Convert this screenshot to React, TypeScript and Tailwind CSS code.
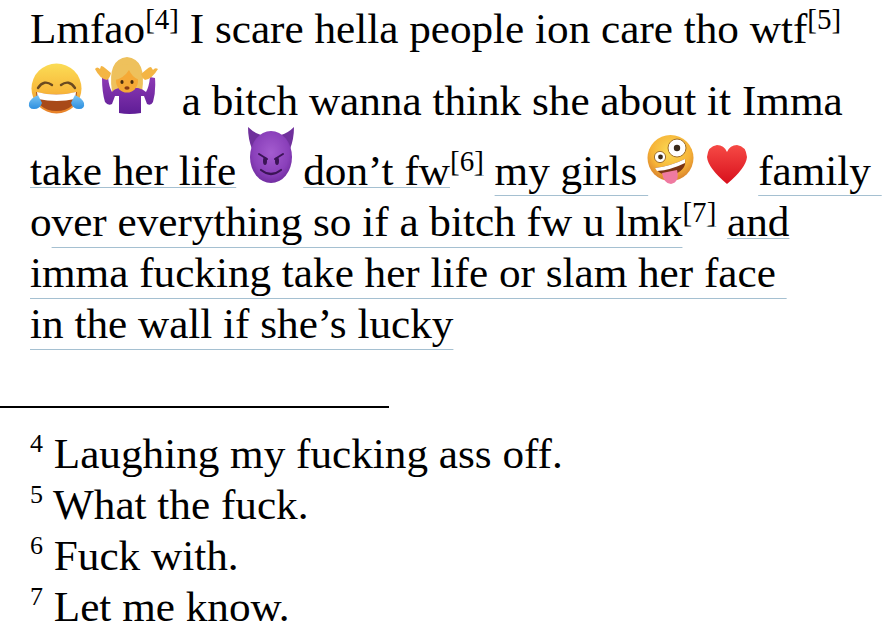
import React from "react";

const emojiBox = "inline-block -mt-[70px] blur-[0.5px]";

const LaughEmoji = () => (
  <svg viewBox="0 0 57 51" className={`${emojiBox} w-[57px] h-[51px] -ml-[2px] align-[1px]`}>
    <defs>
      <linearGradient id="laughFace" x1="0" y1="0" x2="0" y2="1">
        <stop offset="0%" stopColor="#fbdc55" />
        <stop offset="55%" stopColor="#f8b93c" />
        <stop offset="100%" stopColor="#e77f28" />
      </linearGradient>
      <linearGradient id="laughTear" x1="0" y1="0" x2="0" y2="1">
        <stop offset="0%" stopColor="#7cc4f2" />
        <stop offset="100%" stopColor="#2c8fe0" />
      </linearGradient>
    </defs>
    <circle cx="28.500" cy="25.500" r="25" fill="url(#laughFace)" />
    <path d="M10 25q6-9 14-3M33 22q8-6 14 3" fill="none" stroke="#6b4a20" strokeWidth="2.400" strokeLinecap="round" />
    <path d="M8 29q20 5 41 0q-1 19-20.500 19q-19.500 0-20.500-19z" fill="#a84a18" />
    <path d="M9 29q19 5 39 0l-1 7q-18 4-37 0z" fill="#fff" />
    <path d="M10 32q-7 3-9 8q-1 6 5 6q6 0 8-6z" fill="url(#laughTear)" />
    <path d="M47 32q7 3 9 8q1 6-5 6q-6 0-8-6z" fill="url(#laughTear)" />
  </svg>
);

const ShrugEmoji = () => (
  <svg viewBox="0 0 63 59" className={`${emojiBox} w-[63px] h-[59px] ml-[10px] mr-[13px] align-baseline`}>
    <defs>
      <linearGradient id="shrugTop" x1="0" y1="0" x2="0" y2="1">
        <stop offset="0%" stopColor="#8e3bb5" />
        <stop offset="100%" stopColor="#5f1d96" />
      </linearGradient>
    </defs>
    <path d="M17 36Q12 3 32 1Q52 3 47 36q-15 4-30 0z" fill="#eec15c" />
    <path d="M7 22q0 14 3 24q3 4 7 2l3-8h4v17q10 2 22 0V40h3l3 8q4 2 6-2q3-10 2-24l-5-1q-1 10-4 15q-3-3-8-4H24q-5 1-7 4q-3-5-4-15z" fill="url(#shrugTop)" />
    <path d="M0 13q2-3 5 0l1-3q2 0 4 2l6 5q-1 5-4 7q-7-1-12-11z" fill="#f4b544" />
    <path d="M63 13q-3-2-5 1l-2-3q-2 0-4 2l-6 5q1 4 4 6q7-1 13-11z" fill="#f4b544" />
    <ellipse cx="32" cy="25" rx="11" ry="11.500" fill="#f5a936" />
    <path d="M20 24q9-2 14-10q3 7 10 10q1-15-12-16q-13 1-12 16z" fill="#eec15c" />
    <ellipse cx="27" cy="26" rx="1.600" ry="2" fill="#4a2c10" />
    <ellipse cx="37" cy="26" rx="1.600" ry="2" fill="#4a2c10" />
    <ellipse cx="32" cy="32" rx="2.600" ry="1.800" fill="#8a3d14" />
  </svg>
);

const DevilEmoji = () => (
  <svg viewBox="0 0 47 57" className={`${emojiBox} w-[47px] h-[57px] ml-[12px] mr-[8px] align-[1px]`}>
    <defs>
      <radialGradient id="devilFace" cx="50%" cy="42%" r="60%">
        <stop offset="0%" stopColor="#a45ccf" />
        <stop offset="70%" stopColor="#8a40ba" />
        <stop offset="100%" stopColor="#6f2c9e" />
      </radialGradient>
    </defs>
    <path d="M0 0q0 12 4 22l9-14q-7-2-13-8zM46 0q0 12-4 22L33 8q7-2 13-8z" fill="#70309c" />
    <ellipse cx="23" cy="30" rx="21" ry="26" fill="url(#devilFace)" />
    <path d="M11 27l8 5M35 27l-8 5" stroke="#3b1456" strokeWidth="2" strokeLinecap="round" />
    <ellipse cx="17" cy="34" rx="2" ry="4" fill="#3b1456" />
    <ellipse cx="29" cy="34" rx="2" ry="4" fill="#3b1456" />
    <path d="M13 43q10 8 20 0" fill="none" stroke="#3b1456" strokeWidth="2.200" strokeLinecap="round" />
  </svg>
);

const ZanyEmoji = () => (
  <svg viewBox="0 0 49 49" className={`${emojiBox} w-[49px] h-[49px] -ml-[2px] align-[1px]`}>
    <defs>
      <radialGradient id="zanyFace" cx="50%" cy="35%" r="65%">
        <stop offset="0%" stopColor="#fbdc55" />
        <stop offset="65%" stopColor="#f6b338" />
        <stop offset="100%" stopColor="#d9822c" />
      </radialGradient>
    </defs>
    <circle cx="24.500" cy="23" r="23" fill="url(#zanyFace)" />
    <circle cx="31" cy="13" r="9" fill="#fff" stroke="#a0702c" strokeWidth="1" />
    <circle cx="31" cy="13" r="3.200" fill="#3a2a1a" />
    <circle cx="14" cy="22" r="5.600" fill="#fff" stroke="#a0702c" strokeWidth="1" />
    <circle cx="14.500" cy="22" r="2.400" fill="#3a2a1a" />
    <path d="M9 33q16-2 30-9q2 10-10 15q-13 4-20-6z" fill="#7a3414" />
    <path d="M9 33q16-2 30-9l0 4q-14 7-28 8z" fill="#fff" />
    <path d="M16 38l15-3q3 12-6 14q-7 0-9-11z" fill="#ef7aa0" />
  </svg>
);

const HeartEmoji = () => (
  <svg viewBox="0 0 40 39" className={`${emojiBox} w-[40px] h-[39px] ml-[12px] mr-[11px] align-[1px]`}>
    <defs>
      <linearGradient id="heartFill" x1="0" y1="0" x2="0" y2="1">
        <stop offset="0%" stopColor="#f64a45" />
        <stop offset="100%" stopColor="#d80f1c" />
      </linearGradient>
    </defs>
    <path d="M20 39Q1 23 0 12Q1 1 10 0Q17 0 20 7Q23 0 30 0Q39 1 40 12Q39 23 20 39z" fill="url(#heartFill)" />
  </svg>
);

const Sup = ({ children }: { children: React.ReactNode }) => (
  <span className="text-[29px] leading-none align-[14px]">{children}</span>
);

const rule = "underline decoration-[#a5c0d1] decoration-1 [text-decoration-skip-ink:none]";

const Note = ({ n, text }: { n: number; text: string }) => (
  <div className="h-[51px]">
    <span className="text-[26px] leading-none align-[16px]">{n}</span> {text}
  </div>
);

export default function App() {
  return (
    <div
      className="w-[884px] h-[644px] overflow-hidden bg-white text-black text-[43.2px] leading-[51px] whitespace-pre"
      style={{ fontFamily: '"Liberation Serif", serif' }}
    >
      <div className="pl-[30px] pt-[3px]">
        <div className="h-[72px]">
          Lmfao<Sup>[4]</Sup> I scare hella people ion care tho wtf<Sup>[5]</Sup>
        </div>
        <div className="h-[70px]">
          <LaughEmoji />
          <ShrugEmoji />
          {" a bitch wanna think she about it Imma"}
        </div>
        <div className="h-[51px]">
          <span className={`${rule} underline-offset-[2px]`}>take her life</span>
          <DevilEmoji />
          <span className={`${rule} underline-offset-[2px]`}>don’t fw</span>
          <Sup>
            [6<span className={`${rule} underline-offset-[4px]`}>]</span>
          </Sup>{" "}
          <span className={`${rule} underline-offset-[10px]`}>my girls </span>
          <ZanyEmoji />
          <HeartEmoji />
          <span className={`${rule} underline-offset-[10px]`}>family </span>
        </div>
        <div className="h-[51px]">
          o<span className={`${rule} underline-offset-[11px]`}>ver everything so if a bitch fw u lmk</span>
          <Sup>
            [7<span className={`${rule} underline-offset-[4px]`}>]</span>
          </Sup>{" "}
          <span className={`${rule} underline-offset-[2px]`}>and</span>
        </div>
        <div className="h-[51px]">
          <span className={`${rule} underline-offset-[11px]`}>imma fucking take her life or slam her face </span>
        </div>
        <div className="h-[51px]">
          <span className={`${rule} underline-offset-[11px]`}>in the wall if she’s lucky</span>
        </div>
      </div>
      <div className="mt-[57px] w-[389px] h-[2px] bg-black" />
      <div className="pl-[30px] pt-[20px]">
        <Note n={4} text="Laughing my fucking ass off." />
        <Note n={5} text="What the fuck." />
        <Note n={6} text="Fuck with." />
        <Note n={7} text="Let me know." />
      </div>
    </div>
  );
}
